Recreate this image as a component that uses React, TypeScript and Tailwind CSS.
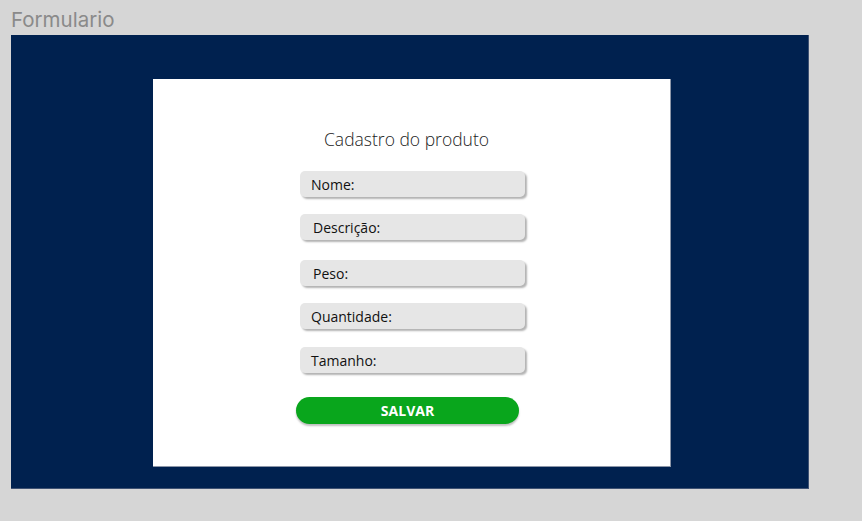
export default function App() {
  const fields = [
    { label: "Nome:", mt: "mt-0", pl: "pl-[11px]" },
    { label: "Descrição:", mt: "mt-[17px]", pl: "pl-[13px]" },
    { label: "Peso:", mt: "mt-[20px]", pl: "pl-[13px]" },
    { label: "Quantidade:", mt: "mt-[17px]", pl: "pl-[11px]" },
    { label: "Tamanho:", mt: "mt-[18px]", pl: "pl-[11px]" },
  ];

  return (
    <div className="w-[862px] h-[521px] bg-[#d6d6d6] overflow-hidden">
      <div
        className="pl-[11px] pt-[7px] h-[35px] text-[20.5px] leading-[26px] text-[#8a8a8a]"
        style={{ fontFamily: "Inter, 'Liberation Sans', sans-serif" }}
      >
        Formulario
      </div>
      <div className="ml-[11px] w-[798px] h-[454px] bg-[#00214f] border-r border-b border-[#3f5273] pt-[44px] pl-[142px]">
        <div
          className="w-[518px] h-[388px] bg-white border-r border-b border-[#8c96a8] flex flex-col pt-[48px]"
          style={{ fontFamily: "'Open Sans', sans-serif" }}
        >
          <div className="pl-[171px] text-[17.5px] leading-[24px] font-light text-[#222]">
            Cadastro do produto
          </div>
          <div className="mt-[20px] pl-[147px] flex flex-col">
            {fields.map((f) => (
              <div
                key={f.label}
                className={`${f.mt} ${f.pl} w-[225px] h-[26px] rounded-[5px] bg-[#e6e6e6] flex items-center text-[14px] text-[#111] shadow-[2px_2px_2px_rgba(0,0,0,0.3)]`}
              >
                {f.label}
              </div>
            ))}
          </div>
          <div className="mt-[24px] pl-[143px]">
            <button className="w-[223px] h-[27px] rounded-full bg-[#09a61c] text-white text-[14px] font-bold flex items-center justify-center shadow-[0_2px_2px_rgba(0,0,0,0.25)]">
              SALVAR
            </button>
          </div>
        </div>
      </div>
    </div>
  );
}
